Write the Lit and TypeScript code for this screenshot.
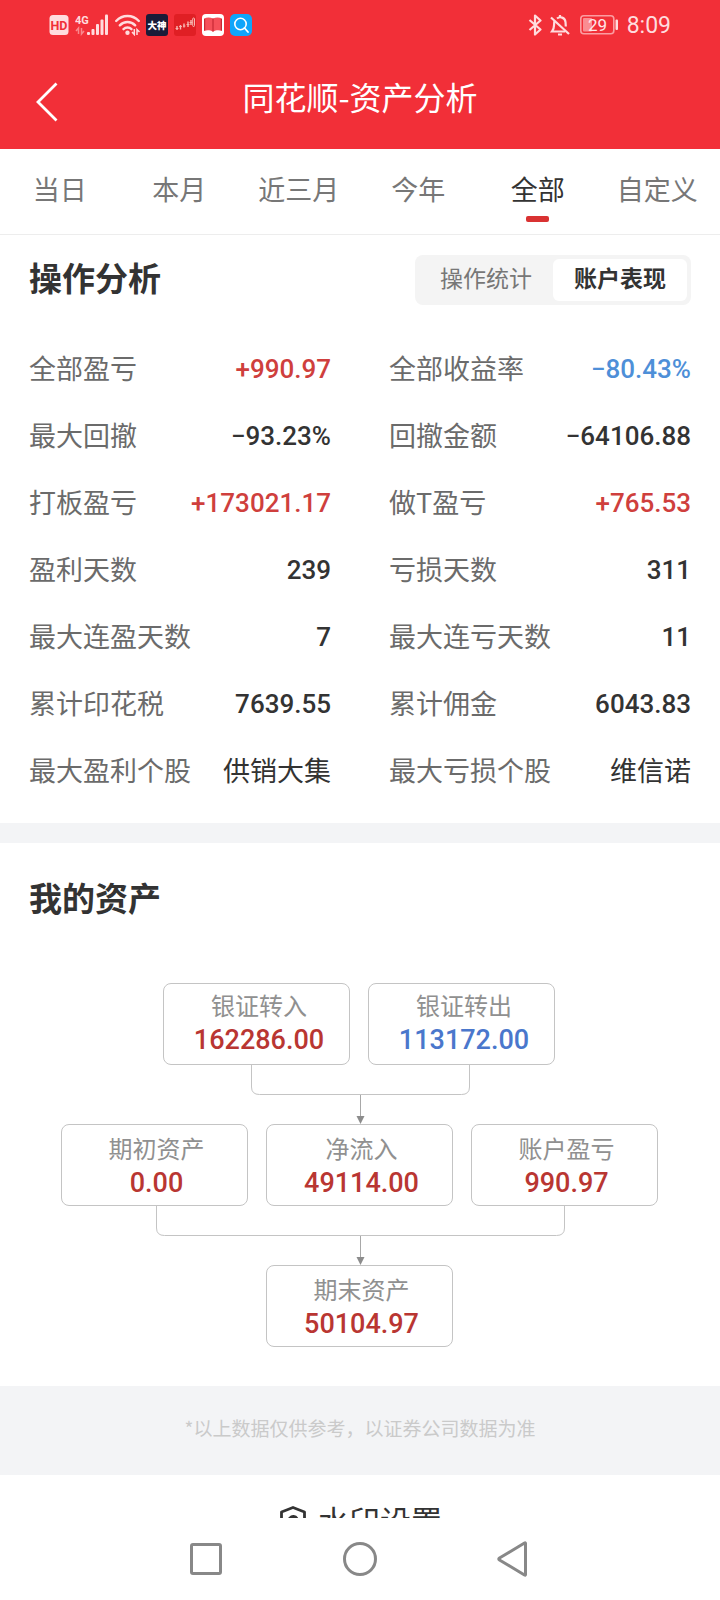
import { LitElement, html, css, svg } from "lit";
import { customElement, state } from "lit/decorators.js";
import { classMap } from "lit/directives/class-map.js";

interface Stat {
  label: string;
  value: string;
  tone?: "up" | "down" | "name";
}

interface Asset {
  label: string;
  value: string;
  out?: boolean;
}

const TABS = ["当日", "本月", "近三月", "今年", "全部", "自定义"];
const VIEWS = ["操作统计", "账户表现"];

const STATS: Stat[] = [
  { label: "全部盈亏", value: "+990.97", tone: "up" },
  { label: "全部收益率", value: "−80.43%", tone: "down" },
  { label: "最大回撤", value: "−93.23%" },
  { label: "回撤金额", value: "−64106.88" },
  { label: "打板盈亏", value: "+173021.17", tone: "up" },
  { label: "做T盈亏", value: "+765.53", tone: "up" },
  { label: "盈利天数", value: "239" },
  { label: "亏损天数", value: "311" },
  { label: "最大连盈天数", value: "7" },
  { label: "最大连亏天数", value: "11" },
  { label: "累计印花税", value: "7639.55" },
  { label: "累计佣金", value: "6043.83" },
  { label: "最大盈利个股", value: "供销大集", tone: "name" },
  { label: "最大亏损个股", value: "维信诺", tone: "name" },
];

const ASSET_ROWS: Asset[][] = [
  [
    { label: "银证转入", value: "162286.00" },
    { label: "银证转出", value: "113172.00", out: true },
  ],
  [
    { label: "期初资产", value: "0.00" },
    { label: "净流入", value: "49114.00" },
    { label: "账户盈亏", value: "990.97" },
  ],
  [{ label: "期末资产", value: "50104.97" }],
];

@customElement("status-bar")
export class StatusBar extends LitElement {
  static styles = css`
    :host {
      display: flex;
      justify-content: space-between;
      align-items: center;
      height: 50px;
      padding: 0 49px;
      color: #ffdcde;
      font-family: Roboto, "Noto Sans CJK SC", sans-serif;
    }
    .group {
      display: flex;
      align-items: center;
      gap: 6px;
    }
    svg {
      display: block;
      flex: none;
    }
    .right {
      gap: 7px;
    }
    .time {
      padding-top: 2px;
      font-size: 23px;
      line-height: 24px;
    }
  `;

  render() {
    return html`
      <div class="group">
        <svg width="20" height="22" viewBox="0 0 20 22" role="img" aria-label="HD">
          <rect x="0.5" y="1" width="19" height="20" rx="3.5" fill="#ffdcde" />
          <text x="10" y="15.500" text-anchor="middle" font-size="12.500" font-weight="700" fill="#f12f37">HD</text>
        </svg>
        <svg width="34" height="22" viewBox="0 0 34 22" role="img" aria-label="4G">
          <text x="0" y="9.500" font-size="11" font-weight="700" fill="#ffdcde">4G</text>
          <path d="M3.5 20v-6L1 17M6.500 14v6L9 17" fill="none" stroke="#f9888d" stroke-width="1.500" />
          <g fill="#ffdcde">
            <rect x="12" y="18" width="3" height="3" rx="1" />
            <rect x="16.500" y="15" width="3" height="6" rx="1" />
            <rect x="21" y="10" width="3" height="11" rx="1" />
            <rect x="25.500" y="5.500" width="3" height="15.500" rx="1" />
            <rect x="30" y="0.500" width="3" height="20.500" rx="1" />
          </g>
        </svg>
        <svg width="25" height="22" viewBox="0 0 25 22" role="img" aria-label="WiFi">
          <g fill="none" stroke="#ffdcde" stroke-width="2.400" stroke-linecap="round">
            <path d="M1.200 7C7.500 .300 17.500 .300 23.800 7" />
            <path d="M4.800 11.300c4.300-4.400 11.100-4.400 15.400 0" />
            <path d="M8.500 15.200c2.200-2.200 5.800-2.200 8 0" />
          </g>
          <circle cx="12.500" cy="18.800" r="2.200" fill="#ffdcde" />
          <path d="M19.300 15v5.500L17 18M22 21v-5.500l2.500 2.500" fill="none" stroke="#ffdcde" stroke-width="1.500" />
        </svg>
        <svg width="22" height="22" viewBox="0 0 22 22" role="img" aria-label="大神">
          <rect width="22" height="22" rx="3" fill="#1b1b38" />
          <text x="11" y="14.500" text-anchor="middle" font-size="9.500" font-weight="900" fill="#fff">大神</text>
        </svg>
        <svg width="22" height="22" viewBox="0 0 22 22" aria-hidden="true">
          <rect width="22" height="22" rx="3" fill="#e01f24" />
          <path d="M1.500 14.500h3M5 12.500h3M9 12h2.500M12.500 10.500h3M15.500 8.500h3" stroke="#f7a3a0" stroke-width="1.200" />
          <path d="M3 12v4M6.500 11v4.500M10 9.500v4M14 7.500v5.500M17 6v5" stroke="#f7b9b4" stroke-width="1.400" />
          <rect x="18.700" y="4" width="1.800" height="8.500" rx=".900" fill="none" stroke="#f7b9b4" />
        </svg>
        <svg width="22" height="22" viewBox="0 0 22 22" aria-hidden="true">
          <rect width="22" height="22" rx="4" fill="#fff" />
          <path d="M2 4.500c3-1.500 6-1.500 9 0 3-1.500 6-1.500 9 0v12.500c-3-1-6-1-9 .800-3-1.800-6-1.800-9-.800z" fill="#f6505a" />
          <path d="M11 4.500v13" stroke="#c82834" stroke-width="1.200" />
          <path d="M2.600 5v11.500M19.400 5v11.500" stroke="#c82834" stroke-width="1.200" />
        </svg>
        <svg width="22" height="22" viewBox="0 0 22 22" aria-hidden="true">
          <rect width="22" height="22" rx="5" fill="#0fa5fa" />
          <circle cx="10.500" cy="10" r="5.700" fill="none" stroke="#fff" stroke-width="1.600" />
          <path d="M14.500 14l3.500 4" stroke="#fff" stroke-width="1.800" stroke-linecap="round" />
        </svg>
      </div>
      <div class="group right">
        <svg width="15" height="22" viewBox="0 0 15 22" role="img" aria-label="蓝牙">
          <path d="M1.500 6l11 9.500-5.500 5V1.500l5.500 5-11 9.500" fill="none" stroke="#ffdcde" stroke-width="2.200" stroke-linejoin="round" />
        </svg>
        <svg width="20" height="22" viewBox="0 0 20 22" role="img" aria-label="静音">
          <g fill="none" stroke="#ffdcde" stroke-width="2.200">
            <path d="M4.500 7c-1 4 .500 7-2.500 10.500h13" />
            <path d="M7 4.500C10 2 15 3.500 15.500 8l.300 4.500" />
            <path d="M1 3.500l18 16.500" />
            <path d="M8 20.500h4M10 1v2" />
          </g>
        </svg>
        <svg width="43" height="22" viewBox="0 0 43 22" role="img" aria-label="电量 29%">
          <rect x="3.800" y="1.800" width="33" height="18" rx="3" fill="none" stroke="#fb9da1" stroke-width="1.600" />
          <rect x="6" y="4" width="9" height="13.600" rx="1" fill="#fa8d92" />
          <rect x="38.500" y="5.500" width="2.500" height="10.500" rx="1" fill="#ffdcde" />
          <text x="20.500" y="17" text-anchor="middle" font-size="17" fill="#ffe6e7">29</text>
        </svg>
        <span class="time">8:09</span>
      </div>
    `;
  }
}

@customElement("asset-flow")
export class AssetFlow extends LitElement {
  static styles = css`
    :host {
      display: flex;
      flex-direction: column;
      align-items: center;
      padding-right: 2px;
    }
    .row {
      display: flex;
      gap: 18px;
    }
    .card {
      box-sizing: border-box;
      width: 187px;
      height: 82px;
      padding: 5px 0 0 5px;
      border: 1px solid #c4c4c4;
      border-radius: 8px;
      text-align: center;
    }
    .row:first-of-type .card {
      padding-top: 3px;
    }
    .label {
      color: #909090;
      font-size: 24px;
      line-height: 36px;
    }
    .value {
      color: #b93632;
      font-family: Roboto, sans-serif;
      font-weight: 500;
      font-size: 27px;
      line-height: 34px;
    }
    .out {
      color: #4a77cc;
    }
    .link {
      display: block;
      fill: none;
      stroke: #c4c4c4;
    }
    .tip {
      fill: #8c8c8c;
      stroke: none;
    }
  `;

  private link(half: number) {
    const left = 299.5 - half;
    const right = 299.5 + half;
    return svg`<svg class="link" width="597" height="59" viewBox="0 0 597 59" aria-hidden="true">
      <path d="M${left} 0V22Q${left} 29.500 ${left + 8} 29.500H${right - 8}Q${right} 29.500 ${right} 22V0" />
      <path d="M299.500 30V54" stroke="#a8a8a8" />
      <path class="tip" d="M295.500 51h8l-4 8z" />
    </svg>`;
  }

  render() {
    const halves = [109, 204];
    return ASSET_ROWS.map(
      (row, i) => html`
        <div class="row">
          ${row.map(
            (a) => html`<div class="card">
              <div class="label">${a.label}</div>
              <div class=${classMap({ value: true, out: !!a.out })}>${a.value}</div>
            </div>`
          )}
        </div>
        ${i < halves.length ? this.link(halves[i]) : null}
      `
    );
  }
}

@customElement("app-root")
export class AppRoot extends LitElement {
  @state() private tab = 4;
  @state() private view = 1;

  static styles = css`
    :host {
      display: flex;
      flex-direction: column;
      height: 100vh;
      background: #fff;
      color: #333;
      font-family: "Noto Sans CJK SC", sans-serif;
    }
    button {
      margin: 0;
      padding: 0;
      border: 0;
      background: none;
      color: inherit;
      font: inherit;
      cursor: pointer;
    }
    svg {
      display: block;
    }
    .top {
      flex: none;
      background: #f22f38;
      color: #fff;
    }
    .titlebar {
      display: grid;
      grid-template-columns: 92px 1fr 92px;
      align-items: center;
      height: 99px;
    }
    .back {
      display: flex;
      align-items: center;
      height: 99px;
      padding: 4px 0 0 36px;
    }
    h1 {
      margin: 0;
      padding-bottom: 8px;
      font-size: 32px;
      line-height: 48px;
      font-weight: 400;
      text-align: center;
    }
    .tabs {
      flex: none;
      display: grid;
      grid-template-columns: repeat(6, 1fr);
      height: 85px;
      padding-right: 3px;
      border-bottom: 1px solid #ededed;
    }
    .tab {
      display: flex;
      flex-direction: column;
      align-items: center;
      padding-top: 20px;
      color: #777;
      font-size: 27px;
      line-height: 40px;
      white-space: nowrap;
    }
    .tab.on {
      color: #333;
    }
    .tab.on::after {
      content: "";
      width: 23px;
      height: 6px;
      margin-top: 7px;
      border-radius: 2px;
      background: #d93232;
    }
    main {
      flex: 1;
      min-height: 0;
      overflow: hidden auto;
      scrollbar-width: none;
    }
    .head {
      display: flex;
      justify-content: space-between;
      align-items: center;
      padding: 20px 29px 0;
    }
    h2 {
      margin: 0;
      font-size: 33px;
      line-height: 48px;
      font-weight: 700;
    }
    .head h2 {
      line-height: 44px;
      padding-bottom: 6px;
    }
    .switch {
      display: flex;
      padding: 4px;
      border-radius: 8px;
      background: #f4f4f4;
    }
    .seg {
      width: 134px;
      height: 42px;
      border-radius: 6px;
      color: #777;
      font-size: 23px;
      line-height: 36px;
      padding-bottom: 6px;
    }
    .seg.on {
      background: #fff;
      color: #333;
      font-weight: 700;
    }
    .stats {
      display: grid;
      grid-template-columns: 1fr 1fr;
      column-gap: 58px;
      margin: 0;
      padding: 29px 29px 20px;
    }
    .stat {
      display: flex;
      justify-content: space-between;
      align-items: center;
      height: 67px;
      font-size: 27px;
      line-height: 40px;
      white-space: nowrap;
    }
    dt {
      color: #6b6b6b;
    }
    dd {
      margin: 0;
      padding-top: 3px;
      color: #333;
      font-family: Roboto, sans-serif;
      font-weight: 500;
      font-size: 26px;
    }
    .up {
      color: #cf3f3d;
    }
    .down {
      color: #4e8fd8;
    }
    .name {
      padding-top: 0;
      font-family: inherit;
      font-weight: 400;
      font-size: 27px;
    }
    .assets {
      padding: 30px 0 39px;
      border-top: 20px solid #f3f4f6;
    }
    .assets h2 {
      padding: 0 29px 62px;
    }
    .note {
      margin: 0;
      padding: 28px 0 33px;
      background: #f3f4f6;
      color: #cacaca;
      font-size: 19px;
      line-height: 28px;
      text-align: center;
    }
    .mark {
      display: flex;
      justify-content: center;
      align-items: center;
      gap: 12px;
      width: 100%;
      height: 89px;
      padding-left: 2px;
      font-size: 31px;
      line-height: 46px;
    }
    .nav {
      flex: none;
      display: flex;
      justify-content: center;
      height: 82px;
      background: #fff;
    }
    .key {
      display: flex;
      justify-content: center;
      align-items: center;
      width: 153px;
    }
    .key svg {
      fill: none;
      stroke: #888;
      stroke-width: 3;
      stroke-linejoin: round;
    }
  `;

  render() {
    return html`
      <header class="top">
        <status-bar></status-bar>
        <div class="titlebar">
          <button class="back" aria-label="返回">
            <svg width="22" height="40" viewBox="0 0 22 40" fill="none" stroke="#fff" stroke-width="2.800">
              <path d="M20.500 1.500L2 20l18.500 18.500" />
            </svg>
          </button>
          <h1>同花顺-资产分析</h1>
        </div>
      </header>
      <nav class="tabs">
        ${TABS.map(
          (t, i) => html`<button
            class=${classMap({ tab: true, on: i === this.tab })}
            aria-pressed=${i === this.tab}
            @click=${() => (this.tab = i)}
          >${t}</button>`
        )}
      </nav>
      <main>
        <section>
          <div class="head">
            <h2>操作分析</h2>
            <div class="switch">
              ${VIEWS.map(
                (v, i) => html`<button
                  class=${classMap({ seg: true, on: i === this.view })}
                  aria-pressed=${i === this.view}
                  @click=${() => (this.view = i)}
                >${v}</button>`
              )}
            </div>
          </div>
          <dl class="stats">
            ${STATS.map(
              (s) => html`<div class="stat">
                <dt>${s.label}</dt>
                <dd class=${s.tone ?? ""}>${s.value}</dd>
              </div>`
            )}
          </dl>
        </section>
        <section class="assets">
          <h2>我的资产</h2>
          <asset-flow></asset-flow>
        </section>
        <p class="note">*以上数据仅供参考，以证券公司数据为准</p>
        <button class="mark">
          <svg width="26" height="28" viewBox="0 0 26 28" fill="none" stroke="#333" stroke-width="2.800" stroke-linejoin="round">
            <path d="M13 1.500L24.500 6v16L13 26.500 1.500 22V6z" />
            <path d="M17 12.500a4.500 4.500 0 1 0 .500 4" />
          </svg>
          <span>水印设置</span>
        </button>
      </main>
      <nav class="nav">
        <button class="key" aria-label="最近任务">
          <svg width="34" height="34" viewBox="0 0 34 34"><rect x="1.500" y="2.500" width="29" height="29" rx="1.500" /></svg>
        </button>
        <button class="key" aria-label="主屏幕">
          <svg width="34" height="34" viewBox="0 0 34 34"><circle cx="17" cy="17" r="15.500" /></svg>
        </button>
        <button class="key" aria-label="返回上一级">
          <svg width="32" height="36" viewBox="0 0 32 36"><path d="M28.500 2.500v31q0 1-1 .500L2.500 19q-1.500-1 0-2L27.500 2q1-.500 1 .500z" /></svg>
        </button>
      </nav>
    `;
  }
}
